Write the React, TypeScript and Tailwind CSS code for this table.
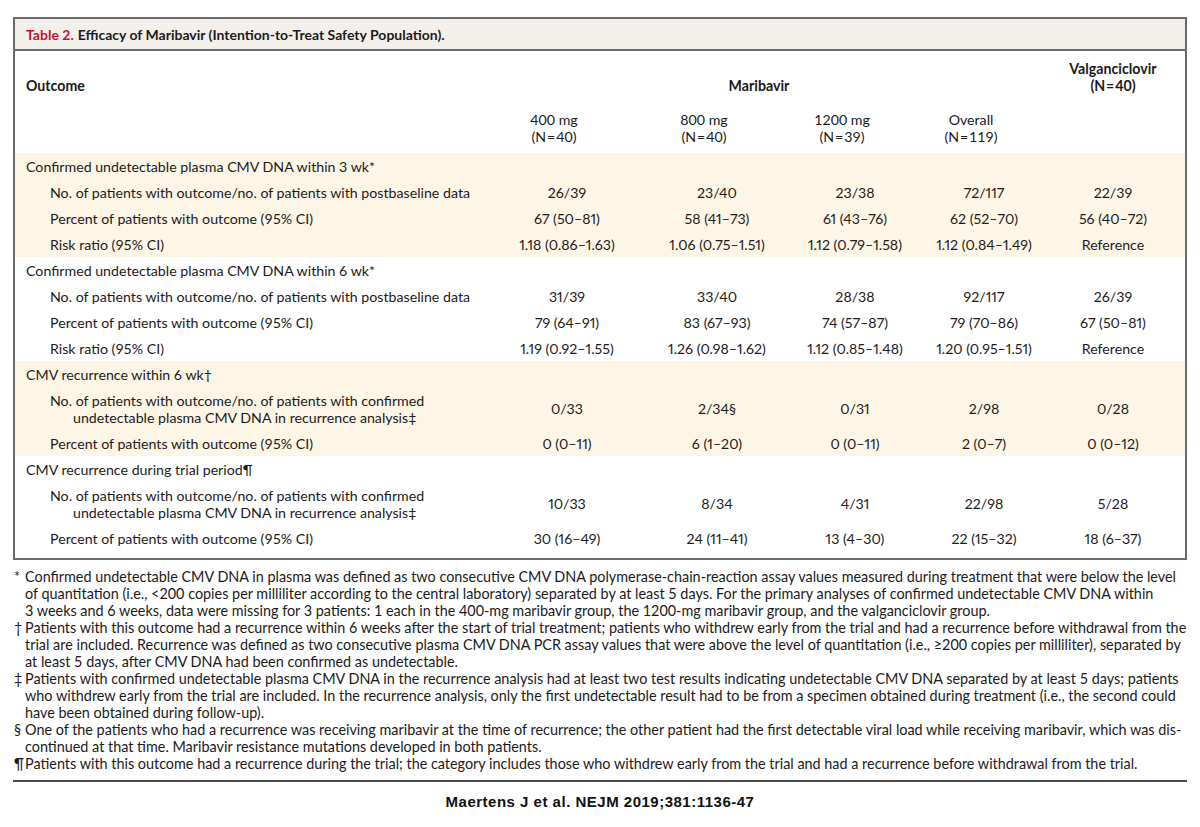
import React from "react"

type Row = {
  label: string[]
  values: string[]
}

type Group = {
  title: string
  shaded: boolean
  rows: Row[]
}

const groups: Group[] = [
  {
    title: "Confirmed undetectable plasma CMV DNA within 3 wk*",
    shaded: true,
    rows: [
      {
        label: ["No. of patients with outcome/no. of patients with postbaseline data"],
        values: ["26/39", "23/40", "23/38", "72/117", "22/39"],
      },
      {
        label: ["Percent of patients with outcome (95% CI)"],
        values: ["67 (50–81)", "58 (41–73)", "61 (43–76)", "62 (52–70)", "56 (40–72)"],
      },
      {
        label: ["Risk ratio (95% CI)"],
        values: ["1.18 (0.86–1.63)", "1.06 (0.75–1.51)", "1.12 (0.79–1.58)", "1.12 (0.84–1.49)", "Reference"],
      },
    ],
  },
  {
    title: "Confirmed undetectable plasma CMV DNA within 6 wk*",
    shaded: false,
    rows: [
      {
        label: ["No. of patients with outcome/no. of patients with postbaseline data"],
        values: ["31/39", "33/40", "28/38", "92/117", "26/39"],
      },
      {
        label: ["Percent of patients with outcome (95% CI)"],
        values: ["79 (64–91)", "83 (67–93)", "74 (57–87)", "79 (70–86)", "67 (50–81)"],
      },
      {
        label: ["Risk ratio (95% CI)"],
        values: ["1.19 (0.92–1.55)", "1.26 (0.98–1.62)", "1.12 (0.85–1.48)", "1.20 (0.95–1.51)", "Reference"],
      },
    ],
  },
  {
    title: "CMV recurrence within 6 wk†",
    shaded: true,
    rows: [
      {
        label: [
          "No. of patients with outcome/no. of patients with confirmed",
          "undetectable plasma CMV DNA in recurrence analysis‡",
        ],
        values: ["0/33", "2/34§", "0/31", "2/98", "0/28"],
      },
      {
        label: ["Percent of patients with outcome (95% CI)"],
        values: ["0 (0–11)", "6 (1–20)", "0 (0–11)", "2 (0–7)", "0 (0–12)"],
      },
    ],
  },
  {
    title: "CMV recurrence during trial period¶",
    shaded: false,
    rows: [
      {
        label: [
          "No. of patients with outcome/no. of patients with confirmed",
          "undetectable plasma CMV DNA in recurrence analysis‡",
        ],
        values: ["10/33", "8/34", "4/31", "22/98", "5/28"],
      },
      {
        label: ["Percent of patients with outcome (95% CI)"],
        values: ["30 (16–49)", "24 (11–41)", "13 (4–30)", "22 (15–32)", "18 (6–37)"],
      },
    ],
  },
]

// each footnote keeps the line breaks of the printed table
const footnotes: { mark: string; lines: string[] }[] = [
  {
    mark: "*",
    lines: [
      "Confirmed undetectable CMV DNA in plasma was defined as two consecutive CMV DNA polymerase-chain-reaction assay values measured during treatment that were below the level",
      "of quantitation (i.e., <200 copies per milliliter according to the central laboratory) separated by at least 5 days. For the primary analyses of confirmed undetectable CMV DNA within",
      "3 weeks and 6 weeks, data were missing for 3 patients: 1 each in the 400-mg maribavir group, the 1200-mg maribavir group, and the valganciclovir group.",
    ],
  },
  {
    mark: "†",
    lines: [
      "Patients with this outcome had a recurrence within 6 weeks after the start of trial treatment; patients who withdrew early from the trial and had a recurrence before withdrawal from the",
      "trial are included. Recurrence was defined as two consecutive plasma CMV DNA PCR assay values that were above the level of quantitation (i.e., ≥200 copies per milliliter), separated by",
      "at least 5 days, after CMV DNA had been confirmed as undetectable.",
    ],
  },
  {
    mark: "‡",
    lines: [
      "Patients with confirmed undetectable plasma CMV DNA in the recurrence analysis had at least two test results indicating undetectable CMV DNA separated by at least 5 days; patients",
      "who withdrew early from the trial are included. In the recurrence analysis, only the first undetectable result had to be from a specimen obtained during treatment (i.e., the second could",
      "have been obtained during follow-up).",
    ],
  },
  {
    mark: "§",
    lines: [
      "One of the patients who had a recurrence was receiving maribavir at the time of recurrence; the other patient had the first detectable viral load while receiving maribavir, which was dis-",
      "continued at that time. Maribavir resistance mutations developed in both patients.",
    ],
  },
  {
    mark: "¶",
    lines: [
      "Patients with this outcome had a recurrence during the trial; the category includes those who withdrew early from the trial and had a recurrence before withdrawal from the trial.",
    ],
  },
]

const cols = "grid grid-cols-[477px_150px_150px_126px_132px_126px_1fr]"

function DataRow({ row }: { row: Row }) {
  return (
    <div className={`${cols} py-[4.5px] leading-[17px]`}>
      <div className="pl-[35px]">
        {row.label.map((line, i) => (
          <div key={i} className={i > 0 ? "pl-[23px] whitespace-nowrap" : "whitespace-nowrap"}>
            {line}
          </div>
        ))}
      </div>
      {row.values.map((v, i) => (
        <div key={i} className="flex items-center justify-center whitespace-nowrap [font-variant-numeric:proportional-nums]">
          {v}
        </div>
      ))}
    </div>
  )
}

export default function App() {
  return (
    <div className="min-h-[827px] bg-white font-['Lato',sans-serif] text-[14.2px] text-[#1c1a1a]">
      <div className="px-[13px] pt-[17px]">
        <div className="border-2 border-[#6b6b6b]">
          {/* title bar */}
          <div className="h-[32px] border-b-2 border-[#6b6b6b] bg-[#f3f0ec] pl-[11px] flex items-center text-[14px] font-bold">
            <span className="text-[#c3112e]">Table 2.</span>
            <span className="ml-[4px]">Efficacy of Maribavir (Intention-to-Treat Safety Population).</span>
          </div>

          {/* column headings */}
          <div className="pt-[8.5px] pb-[8.5px] leading-[17px]">
            <div className={`${cols} items-end font-bold`}>
              <div className="pl-[11px]">Outcome</div>
              <div className="col-span-4 text-center pr-[24px]">Maribavir</div>
              <div className="text-center">
                <div>Valganciclovir</div>
                <div>(N{"\u200a=\u200a"}40)</div>
              </div>
            </div>
            <div className={`${cols} mt-[17px]`}>
              <div />
              {[
                ["400 mg", "40"],
                ["800 mg", "40"],
                ["1200 mg", "39"],
                ["Overall", "119"],
              ].map(([dose, n]) => (
                <div key={dose} className="text-center pr-[26px]">
                  <div>{dose}</div>
                  <div>(N{"\u200a=\u200a"}{n})</div>
                </div>
              ))}
            </div>
          </div>

          {/* body */}
          <div className="pb-[7px]">
            {groups.map((g) => (
              <div key={g.title} className={g.shaded ? "bg-[#fdf6e6]" : "bg-white"}>
                <div className="py-[4.5px] pl-[11px] leading-[17px]">{g.title}</div>
                {g.rows.map((r, i) => (
                  <DataRow key={i} row={r} />
                ))}
              </div>
            ))}
          </div>
        </div>

        {/* footnotes */}
        <div className="mt-[7.5px] text-[14.4px] leading-[17px]">
          {footnotes.map((f) => (
            <div key={f.mark} className="flex">
              <div className="w-[12px] shrink-0 pl-[1px]">{f.mark}</div>
              <div>
                {f.lines.map((l, i) => (
                  <div key={i} className="whitespace-nowrap">
                    {l}
                  </div>
                ))}
              </div>
            </div>
          ))}
        </div>

        <div className="mt-[8.5px] h-[2px] bg-[#4a4a4a]" />

        <div className="mt-[10.5px] text-center font-['Liberation_Sans',Arial,sans-serif] text-[15px] font-bold tracking-[0.5px] leading-[17px] text-[#111]">
          Maertens J et al. NEJM 2019;381:1136-47
        </div>
      </div>
    </div>
  )
}
